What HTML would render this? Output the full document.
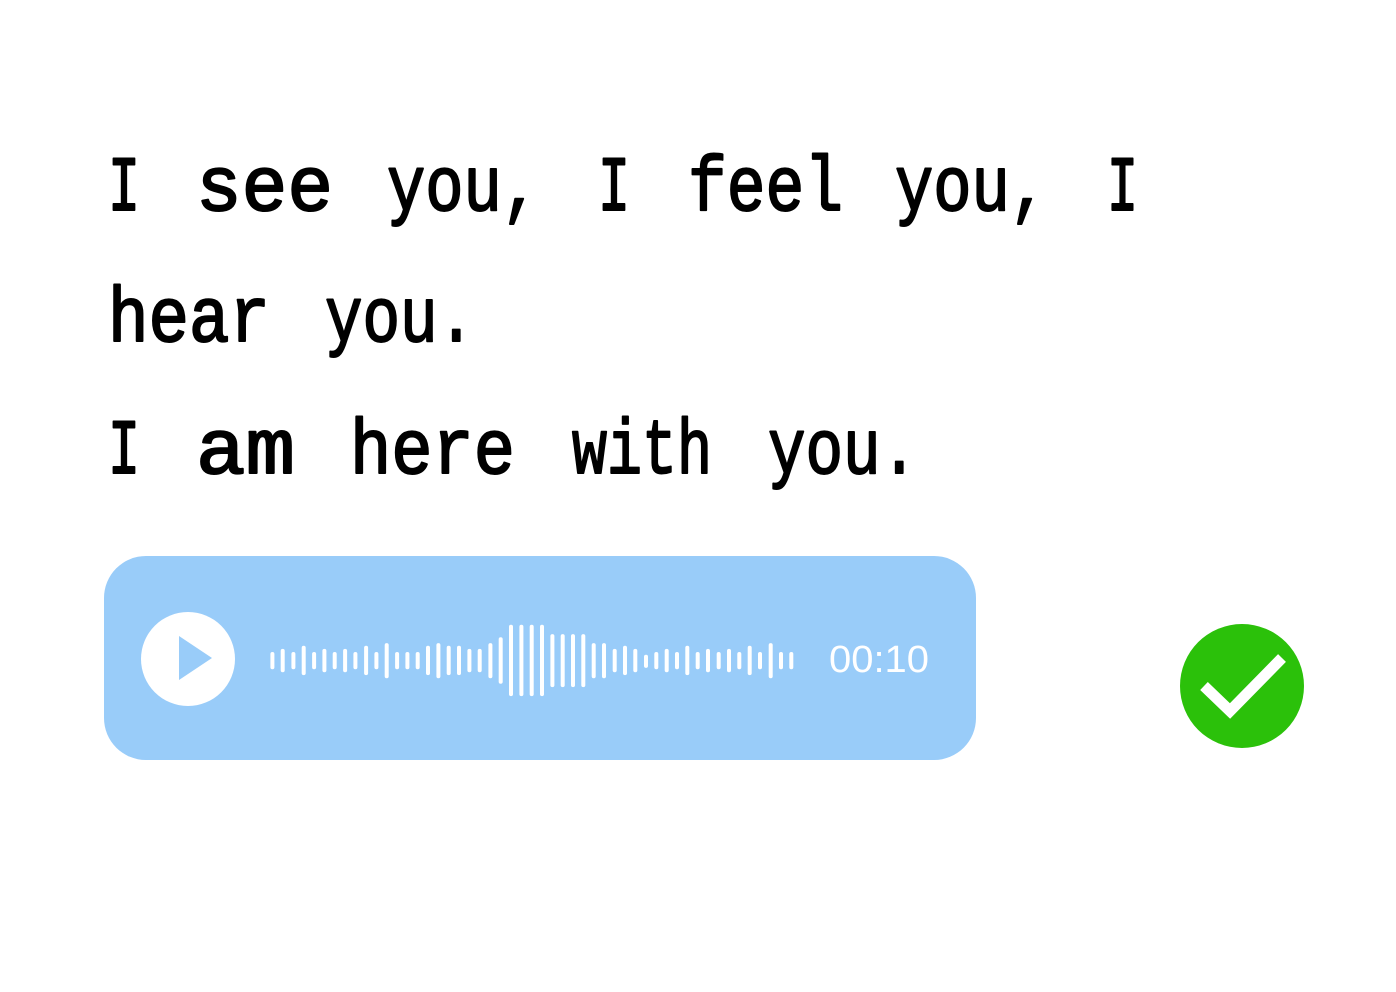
<!DOCTYPE html>
<html><head><meta charset="utf-8"><style>
html,body{margin:0;padding:0;background:#fff;width:1396px;height:992px;overflow:hidden}
svg{position:absolute;left:0;top:0}
text{font-family:"Liberation Sans",sans-serif}
.m text{font-family:"Liberation Mono",monospace}
</style></head><body>
<svg width="1396" height="992" viewBox="0 0 1396 992" xmlns="http://www.w3.org/2000/svg">
<g class="m" font-size="78" fill="#000" stroke="#000" stroke-width="2" stroke-linejoin="round">
<text x="108" y="210" textLength="32" lengthAdjust="spacingAndGlyphs">I</text>
<text x="196" y="210" textLength="137" lengthAdjust="spacingAndGlyphs">see</text>
<text x="387" y="210" textLength="153" lengthAdjust="spacingAndGlyphs">you,</text>
<text x="598" y="210" textLength="32" lengthAdjust="spacingAndGlyphs">I</text>
<text x="688" y="210" textLength="155" lengthAdjust="spacingAndGlyphs">feel</text>
<text x="895" y="210" textLength="153" lengthAdjust="spacingAndGlyphs">you,</text>
<text x="1107" y="210" textLength="31" lengthAdjust="spacingAndGlyphs">I</text>
<text x="108" y="341" textLength="162" lengthAdjust="spacingAndGlyphs">hear</text>
<text x="325" y="341" textLength="150" lengthAdjust="spacingAndGlyphs">you.</text>
<text x="108" y="473" textLength="32" lengthAdjust="spacingAndGlyphs">I</text>
<text x="196" y="473" textLength="99" lengthAdjust="spacingAndGlyphs">am</text>
<text x="350" y="473" textLength="165" lengthAdjust="spacingAndGlyphs">here</text>
<text x="572" y="473" textLength="140" lengthAdjust="spacingAndGlyphs">with</text>
<text x="768" y="473" textLength="150" lengthAdjust="spacingAndGlyphs">you.</text>
</g>
<rect x="104" y="556" width="872" height="204" rx="42" fill="#99CCF9"/>
<circle cx="188" cy="659" r="47" fill="#fff"/>
<path d="M179 636 L212 658 L179 680 Z" fill="#99CCF9"/>
<g stroke="#fff" stroke-width="4" stroke-linecap="round" id="w"></g>
<text x="829" y="672" font-size="38" fill="#fff" textLength="100" lengthAdjust="spacingAndGlyphs">00:10</text>
<circle cx="1242" cy="686" r="62" fill="#2BC10A"/>
<path d="M1204 686 L1230 711 L1282 658" fill="none" stroke="#fff" stroke-width="11"/>
</svg>
<script>
var d=[[36,122,172],[66,113,181],[97,122,172],[127,104,189],[157,122,172],[187,113,181],[217,122,172],[247,113,181],[277,122,172],[308,104,189],[338,122,172],[368,96,198],[398,122,172],[428,122,172],[458,122,172],[488,104,189],[518,96,198],[548,104,189],[578,104,189],[608,113,181],[638,113,181],[669,96,198],[699,79,214],[729,43,250],[759,43,250],[789,43,250],[819,43,250],[849,70,224],[879,70,224],[909,70,224],[939,70,224],[969,96,198],[999,96,198],[1030,113,181],[1060,104,189],[1090,113,181],[1121,130,168],[1151,122,172],[1181,113,181],[1211,122,172],[1241,104,189],[1271,122,172],[1301,113,181],[1332,122,172],[1362,113,181],[1392,122,172],[1422,104,189],[1452,122,172],[1483,96,198],[1513,122,172],[1543,122,172]];
var g=document.getElementById('w'),s='',k=2.904;
d.forEach(function(b){var x=260+b[0]/k,y1=610+b[1]/k+2,y2=610+b[2]/k-2;s+='<line x1="'+x.toFixed(1)+'" y1="'+y1.toFixed(1)+'" x2="'+x.toFixed(1)+'" y2="'+y2.toFixed(1)+'"/>';});
g.innerHTML=s;
</script>
</body></html>
